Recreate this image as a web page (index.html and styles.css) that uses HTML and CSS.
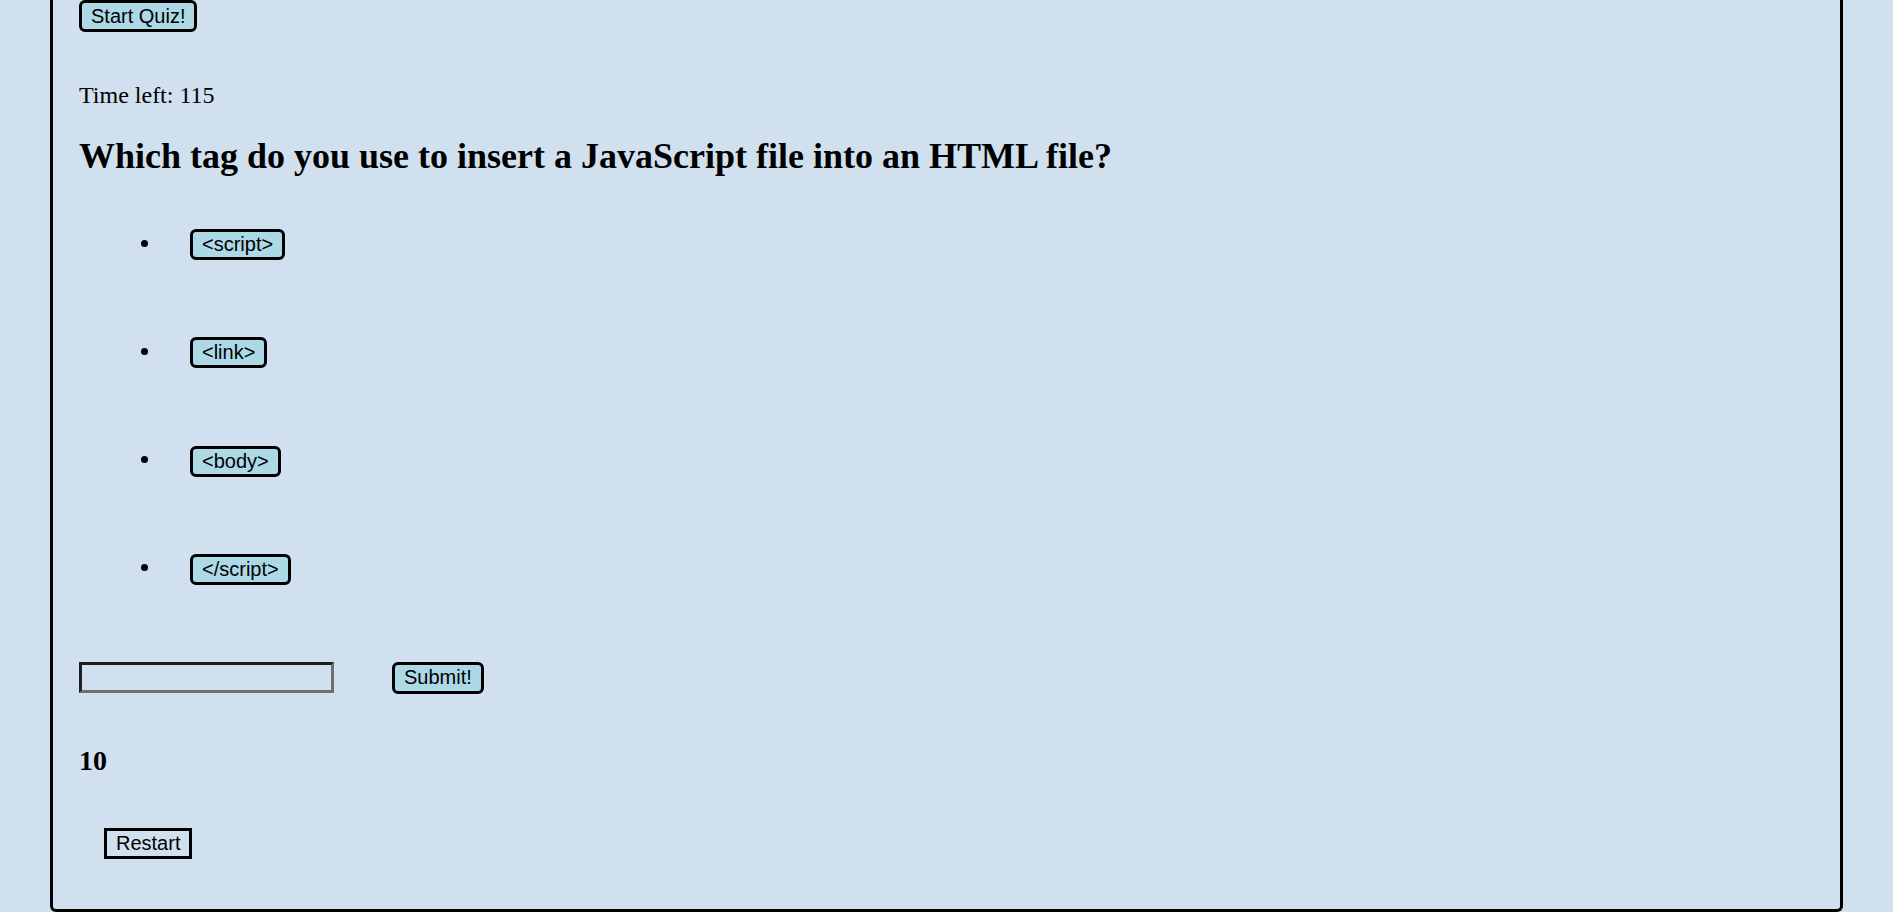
FILE: index.html
```html
<!DOCTYPE html>
<html lang="en">
<head>
<meta charset="utf-8">
<title>Coding Quiz</title>
<link rel="stylesheet" href="styles.css">
</head>
<body>
<main class="quiz">
  <div class="start-row"><button class="btn">Start Quiz!</button></div>
  <p class="timer">Time left: 115</p>
  <h2 class="question">Which tag do you use to insert a JavaScript file into an HTML file?</h2>
  <ul class="answers">
    <li><button class="btn answer">&lt;script&gt;</button></li>
    <li><button class="btn answer">&lt;link&gt;</button></li>
    <li><button class="btn answer">&lt;body&gt;</button></li>
    <li><button class="btn answer">&lt;/script&gt;</button></li>
  </ul>
  <div class="entry">
    <input class="initials" type="text">
    <button class="btn">Submit!</button>
  </div>
  <h3 class="score">10</h3>
  <button class="restart">Restart</button>
</main>
</body>
</html>
```
FILE: styles.css
```css
html, body {
  margin: 0;
  padding: 0;
  background: #d0e0ef;
  overflow: hidden;
}

body {
  font-family: "Liberation Serif", "Times New Roman", serif;
  color: #000;
}

.quiz {
  margin: 0 50px;
  padding: 0 27px 50px 26px;
  border: 3px solid #000;
  border-top: none;
  border-radius: 0 0 6px 6px;
}

.btn {
  font-family: "Liberation Sans", Arial, sans-serif;
  font-size: 20px;
  line-height: 23px;
  color: #000;
  background: #add8e6;
  border: 3px solid #000;
  border-radius: 6px;
  padding: 1.5px 9px;
  margin: 0;
  box-sizing: border-box;
  height: 32px;
}

.start-row {
  display: flex;
}

.timer {
  margin: 50px 0 0 0;
  font-size: 24px;
  line-height: 27px;
}

.question {
  margin: 27px 0 0 0;
  font-size: 36px;
  line-height: 40px;
  font-weight: bold;
}

.answers {
  list-style: none;
  margin: 53px 0 0 0;
  padding: 0 0 0 62px;
}

.answers li {
  display: flex;
  align-items: center;
  gap: 42px;
  height: 31px;
}

.answers li + li {
  margin-top: 77.33px;
}

.answers li::before {
  content: "";
  width: 7px;
  height: 7px;
  border-radius: 50%;
  background: #000;
  margin-bottom: 3px;
}

.answer {
  height: 31px;
  padding: 1px 9px;
}

.entry {
  display: flex;
  align-items: flex-start;
  gap: 58px;
  margin-top: 77px;
}

.initials {
  box-sizing: border-box;
  width: 255px;
  height: 31px;
  margin: 0;
  padding: 1px 3px;
  background: transparent;
  border-style: solid;
  border-width: 3px;
  border-color: #1f1f1f #707070 #707070 #1f1f1f;
  font-family: "Liberation Sans", Arial, sans-serif;
  font-size: 20px;
}

.score {
  margin: 51px 0 0 0;
  font-size: 28px;
  line-height: 31px;
  font-weight: bold;
}

.restart {
  display: block;
  margin: 52px 0 0 25px;
  box-sizing: border-box;
  height: 31px;
  padding: 1px 9px;
  font-family: "Liberation Sans", Arial, sans-serif;
  font-size: 20px;
  line-height: 23px;
  color: #000;
  background: transparent;
  border: 3px solid #000;
  border-radius: 0;
}
```
